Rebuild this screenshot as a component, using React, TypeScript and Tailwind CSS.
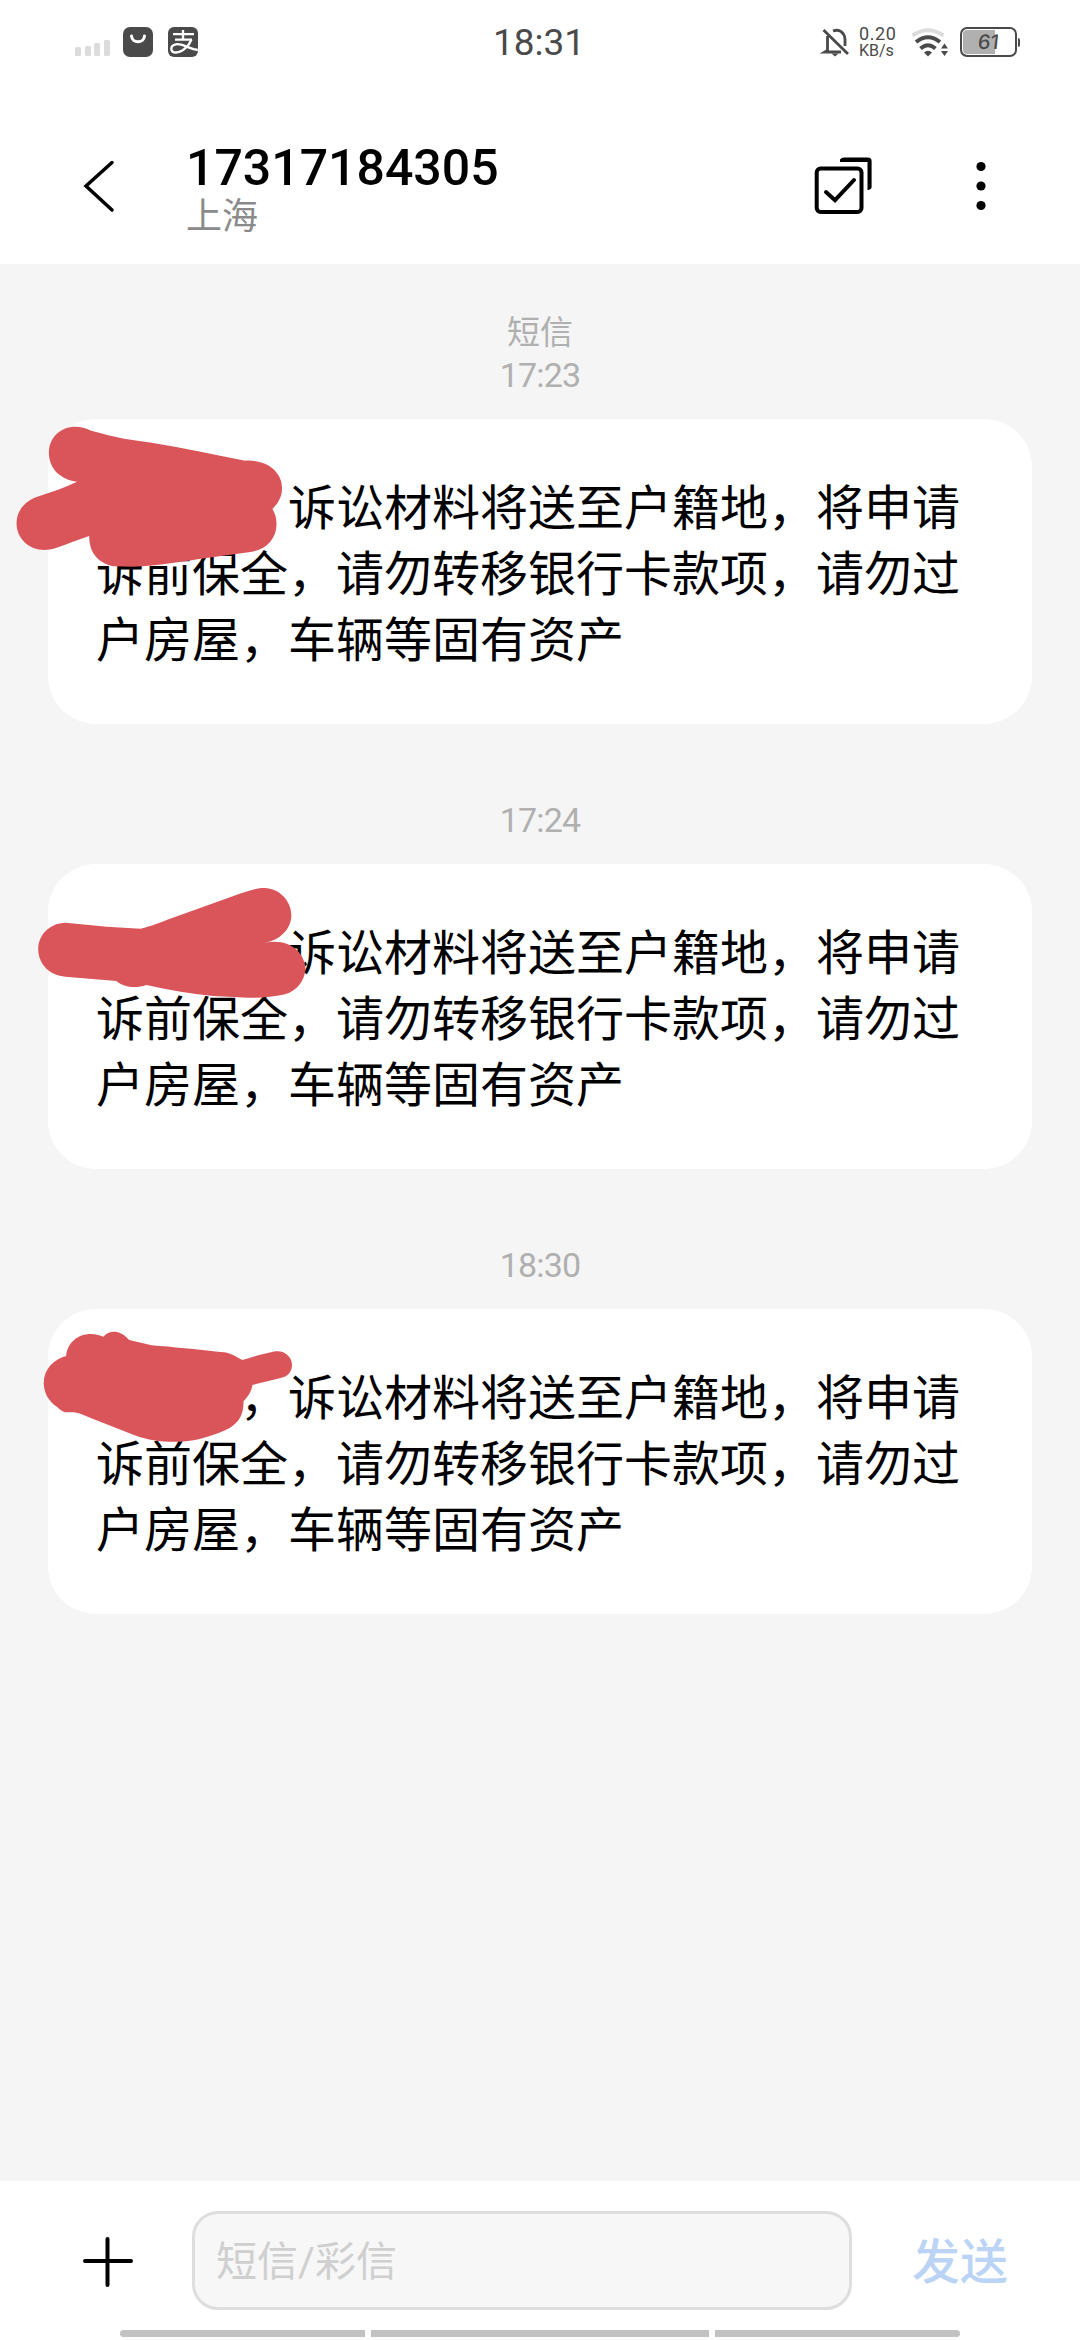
import React from "react";

const BODY = "　　　，诉讼材料将送至户籍地，将申请诉前保全，请勿转移银行卡款项，请勿过户房屋，车辆等固有资产";

const messages = [
  {
    time: "17:23",
    label: "短信",
    // Freehand marker over the sender's name
    mark: "M142 158 C142 95 205 60 265 92 C300 102 330 109 360 116 L440 128 C530 143 620 163 712 182 C775 178 819 215 819 264 C819 290 808 310 791 327 C800 342 803 355 803 374 C802 415 775 447 732 455 L600 474 C530 484 460 498 385 500 L330 499 C288 490 259 462 259 408 C225 419 195 433 160 445 C100 465 48 424 48 370 C48 330 75 300 115 288 C152 275 190 262 224 245 C175 239 142 205 142 158 Z",
    offset: "-top-[19px]",
  },
  {
    time: "17:24",
    mark: "M190 248 L310 260 L408 266 C440 259 465 247 500 234 L700 160 C730 149 750 144 768 144 C812 145 846 183 846 226 C846 268 812 301 768 309 C840 292 887 340 887 388 C884 425 862 452 828 463 C790 471 760 474 720 473 L620 468 C550 461 490 450 425 435 C395 446 360 443 338 423 L190 410 C145 408 111 372 111 328 C111 284 145 249 190 248 Z",
    offset: "-top-[24px]",
  },
  {
    time: "18:30",
    mark: "M192 198 C197 145 248 118 300 140 C318 120 348 118 375 150 L440 166 C500 171 570 178 640 186 C665 185 685 200 704 210 C735 200 765 191 800 184 C828 181 848 201 848 226 C847 246 835 261 815 264 L733 285 C730 305 720 320 707 334 C708 372 695 395 668 413 C630 433 585 448 540 454 C485 459 435 452 395 437 C340 416 285 393 237 373 C222 366 210 366 195 367 C180 366 172 356 165 350 C142 335 127 308 127 278 C128 238 155 208 192 198 Z",
    offset: "-top-[19px]",
  },
];

function StatusBar() {
  return (
    <div className="grid h-[84px] grid-cols-[1fr_auto_1fr] items-center pl-[74px] pr-[58px] text-[#4a4a4a]">
      <svg className="h-8 w-[126px]" viewBox="74 26 126 32" fill="none">
        <g fill="#dcdcdc">
          <rect x="75" y="47" width="6" height="9" rx="1.5" />
          <rect x="85" y="46" width="6" height="10" rx="1.5" />
          <rect x="94" y="43" width="6" height="13" rx="1.5" />
          <rect x="104" y="40" width="6" height="16" rx="1.5" />
        </g>
        <rect x="123" y="27" width="30" height="30" rx="7" fill="#4a4a4a" />
        <path d="M131.5 36 C132 43.5 144 43.500 144.500 36" stroke="#fff" strokeWidth="3" strokeLinecap="round" />
        <rect x="168" y="27" width="30" height="30" rx="6" fill="#4a4a4a" />
        <g stroke="#fff" strokeWidth="2.300">
          <path d="M173 34.200H194M183 30V40M175 39.600H192" />
          <path d="M191.500 39.500C189 46 182 52.500 176 52.500C170 52.500 169.500 45.500 176 44.300C182 43.300 188 48.500 197.800 50" />
        </g>
      </svg>
      <div className="mr-[18px] font-['Roboto'] text-[37px] leading-none">18:31</div>
      <div className="flex w-[202px] items-center justify-self-end">
        <svg className="h-8 w-[32px]" viewBox="820 26 32 32" fill="none" stroke="#4a4a4a" strokeWidth="2.800">
          <path d="M823.500 30L848 54M827.500 36V50.500L825 52H841M833 31C840 28.500 844.500 33 845 39V46" />
          <path d="M831.500 53.500H838.500L835 56.500Z" fill="#4a4a4a" stroke="none" />
        </svg>
        <div className="ml-[7px] w-[42px] font-['Roboto'] text-[18px] leading-[17px]">
          <div className="tracking-[0.600px]">0.20</div>
          <div className="text-[16px]">KB/s</div>
        </div>
        <svg className="ml-[8px] h-8 w-[42px]" viewBox="909 26 42 32" fill="none" strokeWidth="4">
          <path d="M912.500 35.500Q928 25 943.500 35.500" stroke="#dcdcdc" />
          <path d="M916 42Q928 32.500 940 42" stroke="#4a4a4a" />
          <path d="M920.500 48.500Q928 42 935.500 48.500" stroke="#4a4a4a" />
          <path d="M924 52.500Q928 49 932 52.500L928 56.500Z" fill="#4a4a4a" />
          <path d="M944.500 43.500L948 48.500H941ZM944.500 56L948 51H941Z" fill="#4a4a4a" />
        </svg>
        <div className="ml-[9px] flex items-center">
          <div className="flex h-[30px] w-[57px] items-center justify-center rounded-[7px] border-[2.500px] border-[#4a4a4a] bg-[linear-gradient(to_right,#b0b0b0_62%,#fff_62%)] font-['Inter'] text-[20px] font-medium leading-none shadow-[inset_0_0_0_1px_#fff]">
            <span className="-skew-x-6">61</span>
          </div>
          <div className="ml-px h-[9px] w-[2px] rounded-r bg-[#4a4a4a]" />
        </div>
      </div>
    </div>
  );
}

function Header() {
  return (
    <header className="flex h-[180px] pt-[60px]">
      <svg className="ml-[80px] mt-[12px] h-[60px] w-[40px]" viewBox="80 156 40 60" fill="none" stroke="#000" strokeWidth="3.500" strokeLinecap="round">
        <path d="M112 162.500L86 186L112 210" />
      </svg>
      <div className="ml-[66px] flex-1">
        <div className="font-['Roboto'] text-[50px] font-medium leading-[48px] text-black">17317184305</div>
        <div className="pt-[2px] text-[36px] leading-[46px] text-[#8a8a8a]">上海</div>
      </div>
      <svg className="mr-[72px] mt-[6px] h-[72px] w-[198px]" viewBox="810 150 198 72" fill="none" stroke="#000" strokeWidth="4">
        <rect x="816.700" y="168.400" width="44.800" height="43.600" rx="4" />
        <path d="M826 192L835 200.200L854 180" strokeLinecap="round" />
        <path d="M840 162V159.500Q841.500 157.500 844 157.500H868Q871.600 157.500 871.600 161V187Q871.600 189.500 867.500 190V162Z" fill="#000" stroke="none" />
        <g fill="#000" stroke="none">
          <circle cx="981" cy="166.500" r="4.600" />
          <circle cx="981" cy="186" r="4.600" />
          <circle cx="981" cy="205.500" r="4.600" />
        </g>
      </svg>
    </header>
  );
}

export default function App() {
  return (
    <div className="flex h-[2340px] w-[1080px] flex-col overflow-hidden bg-white font-['Roboto','Noto_Sans_CJK_SC',sans-serif]">
      <StatusBar />
      <Header />
      <main className="flex-1 bg-[#f5f5f5] px-12">
        {messages.map((m) => (
          <section key={m.time}>
            <div className={`flex flex-col justify-end pb-[22px] text-center text-[34px] leading-[44px] tracking-[-0.800px] text-[#b0b0b0] ${m.label ? "h-[155px]" : "h-[140px]"}`}>
              {m.label && <div className="-mb-[2px] text-[33px] tracking-normal">{m.label}</div>}
              <div>{m.time}</div>
            </div>
            <div className="relative h-[305px] rounded-[48px] bg-white px-12 pt-[57px]">
              <p className="w-[870px] text-[48px] leading-[66px] text-black">{BODY}</p>
              <svg className={`absolute -left-12 h-[340px] w-[540px] ${m.offset}`} viewBox="0 0 1568 1020" preserveAspectRatio="none">
                <path d={m.mark} fill="#da555a" />
              </svg>
            </div>
          </section>
        ))}
      </main>
      <footer className="flex h-[159px] flex-col">
        <div className="flex h-[149px] items-start pt-[30px]">
          <svg className="ml-[80px] mt-[20px] h-[60px] w-[56px]" viewBox="80 2231 56 60" stroke="#000" strokeWidth="4" strokeLinecap="round">
            <path d="M85 2261H131M107.500 2239V2285" />
          </svg>
          <div className="ml-[56px] flex h-[99px] w-[660px] items-center rounded-[26px] border-[3px] border-[#dedede] bg-[#f7f7f7] pl-[21px] pt-[5px] text-[41px] text-[#cfcfcf]">
            短信/彩信
          </div>
          <div className="ml-[60px] pt-[4px] text-[48px] font-medium leading-[96px] text-[#bbd4f6]">发送</div>
        </div>
        <div className="mx-[120px] flex h-[7px] gap-[6px]">
          <div className="flex-1 rounded-l-full bg-[#c2c2c2]" />
          <div className="w-[338px] bg-[#c2c2c2]" />
          <div className="flex-1 rounded-r-full bg-[#c2c2c2]" />
        </div>
      </footer>
    </div>
  );
}
